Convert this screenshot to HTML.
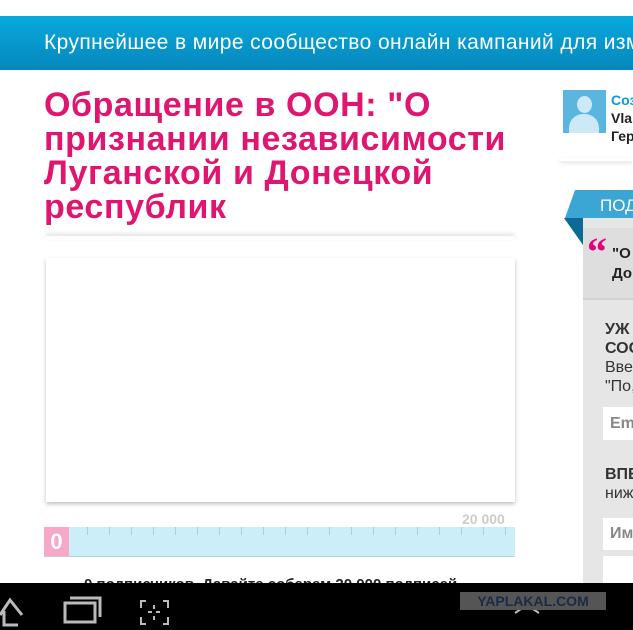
<!DOCTYPE html><html><head><meta charset="utf-8"><style>
html,body{margin:0;width:633px;height:630px;overflow:hidden}
body{background:#fff;font-family:"Liberation Sans",sans-serif}
#w{position:relative;width:633px;height:630px;overflow:hidden}
.a{position:absolute}
</style></head><body><div id="w">
<div class="a" style="left:0;top:16px;width:633px;height:54px;background:linear-gradient(#09a9dc,#0687bd)"></div>
<div class="a" style="left:44px;top:31px;width:589px;overflow:hidden;color:#fff;font-size:21px;letter-spacing:0.4px;white-space:nowrap">Крупнейшее в мире сообщество онлайн кампаний для изменений</div>
<div class="a" style="left:44px;top:88px;width:500px;color:#e0156f;font-size:34px;letter-spacing:0.6px;font-weight:bold;line-height:34px">Обращение в ООН: "О признании независимости Луганской и Донецкой республик</div>
<div class="a" style="left:46px;top:236px;width:468px;height:4px;box-shadow:0 -2px 4px #ddd"></div>
<div class="a" style="left:46px;top:258px;width:469px;height:244px;background:#fff;box-shadow:0 2px 4px rgba(0,0,0,.25)"></div>
<div class="a" style="left:462px;top:511px;color:#ccc;font-size:14px;font-weight:bold">20 000</div>
<div class="a" style="left:44px;top:527px;width:471px;height:29px;background:#cbeef8;border-bottom:1px solid #bcd;background-image:repeating-linear-gradient(90deg,transparent 0 21px,#a8cfdc 21px 22px);background-size:100% 8px;background-repeat:no-repeat"></div>
<div class="a" style="left:44px;top:527px;width:25px;height:29px;background:#f7a8c6;color:#fff;font-weight:bold;font-size:22px;text-align:center;line-height:30px">0</div>
<div class="a" style="left:84px;top:576px;font-size:15px;font-weight:bold;color:#222;white-space:nowrap">0 подписчиков. Давайте соберем 20 000 подписей</div>
<div class="a" style="left:563px;top:90px;width:43px;height:43px;background:#5ab5df"></div>
<div class="a" style="left:577px;top:96px;width:15px;height:17px;border-radius:50%;background:#cde9f5"></div>
<div class="a" style="left:569px;top:114px;width:30px;height:19px;border-radius:14px 14px 0 0;background:#cde9f5"></div>
<div class="a" style="left:611px;top:91px;width:22px;overflow:hidden;font-size:14px;font-weight:bold;line-height:18px;color:#222;white-space:nowrap"><span style="color:#0a9bd6">Соз</span><br>Vla<br>Гер</div>
<div class="a" style="left:560px;top:158px;width:73px;height:3px;box-shadow:0 2px 4px #ddd"></div>
<div class="a" style="left:583px;top:218px;width:50px;height:365px;background:#e6e6e6"></div>
<div class="a" style="left:583px;top:228px;width:50px;height:70px;background:#dedede;border-bottom:2px solid #d3d3d3"></div>
<div class="a" style="left:565px;top:190px;width:68px;height:28px;background:#3ba6d3;clip-path:polygon(10px 0,100% 0,100% 100%,0 100%)"></div>
<div class="a" style="left:564px;top:218px;width:19px;height:27px;background:#0c6a96;clip-path:polygon(0 0,100% 0,100% 100%)"></div>
<div class="a" style="left:600px;top:196px;width:33px;overflow:hidden;color:#fff;font-size:17px;white-space:nowrap">ПОД</div>
<div class="a" style="left:587px;top:232px;color:#e6007e;font-size:40px;font-weight:bold;font-family:'Liberation Serif',serif;line-height:40px">“</div>
<div class="a" style="left:612px;top:244px;width:21px;overflow:hidden;font-size:15px;font-weight:bold;line-height:20px;color:#222;white-space:nowrap">"О<br>До</div>
<div class="a" style="left:605px;top:320px;width:28px;overflow:hidden;font-size:16px;line-height:19px;color:#333;white-space:nowrap"><b>УЖ<br>СОС</b><br>Вве<br>"По,</div>
<div class="a" style="left:603px;top:407px;width:23px;height:33px;overflow:hidden;background:#fff;color:#888;font-size:16px;font-weight:bold;line-height:33px;padding-left:7px;white-space:nowrap">Em</div>
<div class="a" style="left:605px;top:465px;width:28px;overflow:hidden;font-size:16px;line-height:19px;color:#333;white-space:nowrap"><b>ВПЕ</b><br>ниж</div>
<div class="a" style="left:603px;top:518px;width:23px;height:32px;overflow:hidden;background:#fff;color:#888;font-size:16px;font-weight:bold;line-height:32px;padding-left:7px;white-space:nowrap">Им</div>
<div class="a" style="left:603px;top:556px;width:30px;height:27px;background:#fff"></div>
<div class="a" style="left:0;top:583px;width:633px;height:47px;background:#000"></div>
<svg class="a" style="left:0;top:583px" width="633" height="47"><g fill="none" stroke="#bbb" stroke-width="3"><path d="M0 32 L10 17 L22 32 M4 28 V42 H18"/><rect x="65" y="20" width="30" height="19"/><path d="M70 15 H100 V34"/><path d="M146 18h-5v7M163 18h5v7M146 41h-5v-7M163 41h5v-7M154 22v4M154 33v4M148 29h4M156 29h4" stroke-width="2"/><path d="M515 30 L527 22 L539 30" stroke-width="2"/></g></svg>
<div class="a" style="left:460px;top:592px;width:146px;height:18px;background:#555;color:#1a2b44;font-weight:bold;font-size:14px;text-align:center;line-height:18px">YAPLAKAL.COM</div>
</div></body></html>
